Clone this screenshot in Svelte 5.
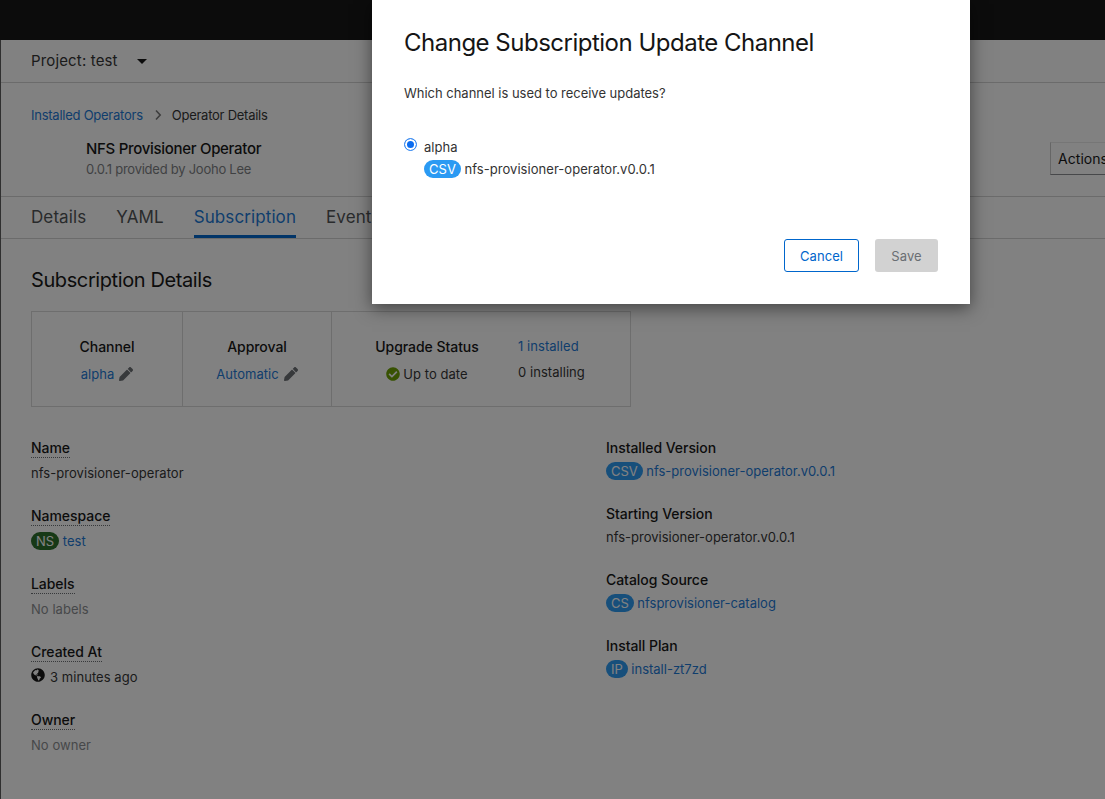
<script lang="ts">
  const leftRows = [
    { label: 'Name', text: 'nfs-provisioner-operator' },
    { label: 'Namespace', badge: 'NS', badgeClass: 'ns', link: 'test' },
    { label: 'Labels', muted: 'No labels' },
    { label: 'Created At', time: '3 minutes ago' },
    { label: 'Owner', muted: 'No owner' }
  ];

  const rightRows = [
    { label: 'Installed Version', badge: 'CSV', link: 'nfs-provisioner-operator.v0.0.1' },
    { label: 'Starting Version', text: 'nfs-provisioner-operator.v0.0.1' },
    { label: 'Catalog Source', badge: 'CS', link: 'nfsprovisioner-catalog' },
    { label: 'Install Plan', badge: 'IP', link: 'install-zt7zd' }
  ];

  const tabs = ['Details', 'YAML', 'Subscription', 'Events'];
</script>

{#snippet pencil()}
  <svg class="pencil" viewBox="0 0 512 512" aria-hidden="true">
    <path d="M497.9 142.1l-46.1 46.1c-4.7 4.7-12.3 4.7-17 0l-111-111c-4.7-4.7-4.7-12.3 0-17l46.1-46.1c18.7-18.7 49.1-18.7 67.9 0l60.1 60.1c18.8 18.7 18.8 49.1 0 67.9zM284.2 99.8L21.6 362.4.4 483.9c-2.9 16.4 11.4 30.6 27.8 27.8l121.5-21.3 262.6-262.6c4.7-4.7 4.7-12.3 0-17l-111-111c-4.8-4.7-12.4-4.7-17.1 0z" />
  </svg>
{/snippet}

<div class="page">
  <header class="masthead"></header>

  <div class="content">
    <div class="project">
      <span class="project-name">Project: test</span>
      <span class="caret"></span>
    </div>

    <div class="head">
      <nav class="crumbs">
        <span class="link">Installed Operators</span>
        <svg class="chevron" viewBox="0 0 8 12" aria-hidden="true"><path d="M2 1.5 6.2 6 2 10.500" /></svg>
        <span>Operator Details</span>
      </nav>
      <div class="title-row">
        <div class="titles">
          <div class="op-name">NFS Provisioner Operator</div>
          <div class="op-by">0.0.1 provided by Jooho Lee</div>
        </div>
        <div class="actions">Actions</div>
      </div>
    </div>

    <div class="tabs">
      {#each tabs as tab}
        <span class="tab" class:active={tab === 'Subscription'}>{tab}</span>
      {/each}
    </div>

    <main class="main">
      <h2>Subscription Details</h2>

      <div class="summary">
        <div class="cell channel">
          <div class="cell-label">Channel</div>
          <div class="cell-value"><span class="link">alpha</span>{@render pencil()}</div>
        </div>
        <div class="cell approval">
          <div class="cell-label">Approval</div>
          <div class="cell-value"><span class="link">Automatic</span>{@render pencil()}</div>
        </div>
        <div class="cell status">
          <div class="status-main">
            <div class="cell-label">Upgrade Status</div>
            <div class="cell-value">
              <svg class="check" viewBox="0 0 512 512" aria-hidden="true">
                <path d="M504 256c0 137-111 248-248 248S8 393 8 256 119 8 256 8s248 111 248 248zM227.300 387.300l184-184c6.200-6.200 6.200-16.400 0-22.600l-22.600-22.600c-6.200-6.200-16.400-6.200-22.600 0L216 308.100l-70.100-70.100c-6.200-6.200-16.400-6.200-22.600 0l-22.600 22.600c-6.200 6.200-6.200 16.400 0 22.600l104 104c6.200 6.200 16.400 6.200 22.600 0z" />
              </svg>
              <span>Up to date</span>
            </div>
          </div>
          <div class="status-side">
            <span class="link">1 installed</span>
            <span>0 installing</span>
          </div>
        </div>
      </div>

      <div class="details">
        <dl class="col left">
          {#each leftRows as row}
            <div class="row">
              <dt><span class="dotted">{row.label}</span></dt>
              <dd>
                {#if row.text}
                  {row.text}
                {:else if row.badge}
                  <span class="badge {row.badgeClass}">{row.badge}</span><span class="link">{row.link}</span>
                {:else if row.time}
                  <svg class="globe" viewBox="0 0 496 512" aria-hidden="true">
                    <path d="M248 8C111 8 0 119 0 256s111 248 248 248 248-111 248-248S385 8 248 8zm82.300 357.600c-3.900 3.900-8 8-11.300 11.300-3 3-5.100 6.700-6.200 10.700-1.500 5.700-2.700 11.400-4.800 16.900l-17.300 46.600c-13.700 3-27.900 4.700-42.500 4.700v-27.400c1.700-12.600-7.600-36.300-22.600-51.300-6-6-9.400-14.100-9.400-22.600v-32c0-11.600-6.300-22.300-16.500-28-14.400-8-34.800-19.100-48.800-26.100-11.400-5.700-22-13-31.500-21.600l-.8-.7c-6.800-6.100-12.800-13.100-17.900-20.700-9.400-13.800-24.700-36.500-34.600-51.200 20.500-45.500 57.400-82 103.200-101.900l24 12c10.600 5.300 23.100-2.400 23.100-14.300v-11.300c8-1.300 16.100-2.100 24.400-2.400l28.300 28.300c6.200 6.200 6.200 16.400 0 22.600L264 139l-10.300 10.300c-3.100 3.100-3.100 8.200 0 11.300l4.700 4.700c3.100 3.100 3.100 8.200 0 11.300l-8 8c-1.500 1.500-3.500 2.300-5.700 2.300h-9c-2.100 0-4.100.8-5.600 2.300l-9.900 9.700c-2.500 2.400-3.100 6.200-1.600 9.300l15.600 31.200c2.700 5.300-1.200 11.600-7.200 11.600h-5.600c-1.900 0-3.800-.7-5.200-2l-9.300-8.100c-2.100-1.900-5.100-2.500-7.800-1.600l-31.200 10.400c-2.400.8-4 3-4 5.600 0 2.200 1.300 4.300 3.300 5.300l11.100 5.500c9.400 4.700 19.800 7.200 30.300 7.200s22.600 27.300 32 32h66.800c8.500 0 16.600 3.400 22.600 9.400l13.700 13.700c5.700 5.700 8.900 13.500 8.900 21.600 0 10.300-4.100 20.100-11.300 27.400z" />
                  </svg>
                  <span class="time">{row.time}</span>
                {:else}
                  <span class="muted">{row.muted}</span>
                {/if}
              </dd>
            </div>
          {/each}
        </dl>

        <dl class="col right">
          {#each rightRows as row}
            <div class="row">
              <dt>{row.label}</dt>
              <dd>
                {#if row.text}
                  {row.text}
                {:else}
                  <span class="badge">{row.badge}</span><span class="link">{row.link}</span>
                {/if}
              </dd>
            </div>
          {/each}
        </dl>
      </div>
    </main>
  </div>

  <div class="backdrop"></div>

  <div class="modal">
    <h1>Change Subscription Update Channel</h1>
    <p class="question">Which channel is used to receive updates?</p>
    <div class="option">
      <span class="radio"></span>
      <div class="option-text">
        <div>alpha</div>
        <div class="csv"><span class="badge">CSV</span><span>nfs-provisioner-operator.v0.0.1</span></div>
      </div>
    </div>
    <div class="buttons">
      <button class="cancel">Cancel</button>
      <button class="save" disabled>Save</button>
    </div>
  </div>
</div>

<style>
  :global(body) {
    margin: 0;
    font-family: Inter, "Open Sans", sans-serif;
    color: #151515;
    overflow: hidden;
  }

  .page {
    position: relative;
    width: 1105px;
    height: 799px;
    overflow: hidden;
    font-size: 13px;
    letter-spacing: 0.05px;
    background: #fff;
  }

  .masthead {
    height: 40px;
    background: #151515;
  }

  .content {
    height: 759px;
    border-left: 1px solid #5a5a5a;
  }

  .project {
    height: 43px;
    box-sizing: border-box;
    padding-left: 30px;
    display: flex;
    align-items: center;
    gap: 19px;
    font-size: 15px;
    letter-spacing: 0.15px;
    color: #333;
    border-bottom: 1px solid #d2d2d2;
  }

  .project-name {
    margin-top: -2px;
  }

  .caret {
    width: 0;
    height: 0;
    border-left: 5px solid transparent;
    border-right: 5px solid transparent;
    border-top: 5px solid #151515;
  }

  .head {
    height: 114px;
    box-sizing: border-box;
    padding: 23px 0 0 30px;
    border-bottom: 1px solid #d2d2d2;
  }

  .crumbs {
    display: flex;
    align-items: center;
    height: 18px;
    letter-spacing: -0.25px;
    color: #333;
  }

  .chevron {
    width: 8px;
    height: 12px;
    margin: 0 10px 0 11px;
    fill: none;
    stroke: #777;
    stroke-width: 1.6;
  }

  .title-row {
    display: flex;
    justify-content: space-between;
    margin-top: 14px;
  }

  .titles {
    margin-left: 55px;
  }

  .op-name {
    font-size: 15px;
    font-weight: 500;
    line-height: 22px;
    letter-spacing: -0.3px;
  }

  .op-by {
    font-size: 13px;
    line-height: 18px;
    letter-spacing: -0.25px;
    color: #7c7f83;
  }

  .actions {
    width: 80px;
    height: 33px;
    box-sizing: border-box;
    margin: 4px -25px 0 0;
    padding-left: 7px;
    display: flex;
    align-items: center;
    font-size: 14px;
    border-left: 1px solid #c8c8c8;
    border-top: 1px solid #e8e8e8;
    border-bottom: 1px solid #8a8d90;
  }

  .tabs {
    height: 42px;
    box-sizing: border-box;
    padding-left: 30px;
    display: flex;
    gap: 30px;
    font-size: 17px;
    letter-spacing: 0.1px;
    border-bottom: 1px solid #d2d2d2;
  }

  .tab {
    height: 41px;
    box-sizing: border-box;
    line-height: 40px;
    color: #4f5255;
    white-space: nowrap;
  }

  .tab.active {
    color: #1a78d6;
    border-bottom: 3px solid #06c;
  }

  .main {
    padding: 27px 0 0 30px;
  }

  h2 {
    margin: 0;
    font-size: 20px;
    font-weight: 400;
    line-height: 28px;
    letter-spacing: -0.4px;
  }

  .summary {
    display: flex;
    width: 600px;
    height: 96px;
    box-sizing: border-box;
    margin-top: 17px;
    border: 1px solid #d9d9d9;
    text-align: center;
  }

  .cell {
    box-sizing: border-box;
    padding-top: 25px;
    border-right: 1px solid #d9d9d9;
  }

  .channel { width: 151px; }
  .approval { width: 149px; }

  .status {
    flex: 1;
    display: flex;
    border-right: 0;
  }

  .status-main {
    width: 190px;
  }

  .cell-label {
    font-size: 14px;
    font-weight: 500;
    line-height: 20px;
    letter-spacing: -0.05px;
  }

  .cell-value {
    display: flex;
    align-items: center;
    justify-content: center;
    height: 20px;
    margin-top: 7px;
    color: #333;
  }

  .pencil {
    width: 14px;
    height: 14px;
    margin-left: 5px;
    fill: #6a6e73;
  }

  .check {
    width: 14px;
    height: 14px;
    margin-right: 3px;
    fill: #6ca100;
  }

  .status-side {
    display: flex;
    flex-direction: column;
    gap: 8px;
    margin-left: -4px;
    text-align: left;
    color: #333;
    line-height: 18px;
  }

  .link {
    color: #1a78d6;
  }

  .details {
    display: grid;
    grid-template-columns: 575px 1fr;
    margin-top: 31px;
  }

  dl, dd {
    margin: 0;
  }

  .row {
    display: flex;
    flex-direction: column;
  }

  .left .row {
    height: 68px;
  }

  .right .row {
    height: 66px;
  }

  dt {
    font-size: 14px;
    font-weight: 500;
    line-height: 20px;
    letter-spacing: -0.05px;
  }

  .dotted {
    display: inline-block;
    line-height: 19px;
    border-bottom: 1px dotted #6a6e73;
  }

  dd {
    display: flex;
    align-items: center;
    height: 20px;
    color: #333;
  }

  .left dd {
    margin-top: 5px;
  }

  .right dd {
    margin-top: 3px;
    letter-spacing: 0;
  }

  .muted {
    color: #8a8d90;
  }

  .badge {
    display: inline-block;
    height: 18px;
    box-sizing: border-box;
    margin-right: 3.5px;
    padding: 0 5px;
    border-radius: 10px;
    background: #2b9af3;
    color: #fff;
    font-size: 13px;
    line-height: 18px;
  }

  .badge.ns {
    background: #2a6e28;
  }

  .globe {
    width: 14px;
    height: 14px;
    margin: -5px 5px 0 0;
    fill: #151515;
  }

  .time {
    color: #333;
  }

  .backdrop {
    position: absolute;
    inset: 0;
    background: rgba(3, 3, 3, 0.5);
  }

  .modal {
    position: absolute;
    top: 0;
    left: 372px;
    width: 598px;
    height: 304px;
    box-sizing: border-box;
    padding: 28px 32px 0;
    background: #fff;
    box-shadow: 0 4px 16px rgba(3, 3, 3, 0.5);
  }

  h1 {
    margin: 0;
    font-size: 24px;
    font-weight: 400;
    line-height: 30px;
    letter-spacing: -0.5px;
  }

  .question {
    margin: 26px 0 0;
    line-height: 18px;
    letter-spacing: -0.02px;
    color: #333;
  }

  .option {
    display: flex;
    gap: 7px;
    margin-top: 36px;
    color: #333;
  }

  .radio {
    width: 13px;
    height: 13px;
    box-sizing: border-box;
    border: 1px solid #3b8cf0;
    border-radius: 50%;
    background: #0a6cf0;
    box-shadow: inset 0 0 0 2px #fff;
  }

  .option-text {
    line-height: 18px;
  }

  .csv {
    display: flex;
    align-items: center;
    margin-top: 4px;
  }

  .buttons {
    position: absolute;
    top: 239px;
    right: 32px;
    display: flex;
    gap: 16px;
  }

  button {
    height: 33px;
    box-sizing: border-box;
    border-radius: 3px;
    font: inherit;
    letter-spacing: inherit;
  }

  .cancel {
    width: 75px;
    border: 1px solid #06c;
    background: #fff;
    color: #06c;
  }

  .save {
    width: 63px;
    border: 0;
    background: #d2d2d2;
    color: #6a6e73;
  }
</style>
